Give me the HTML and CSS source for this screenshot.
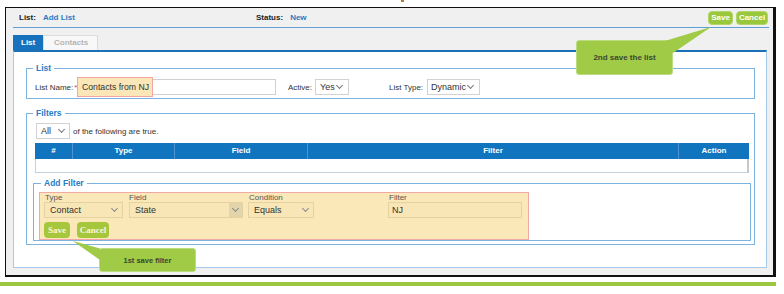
FILE: index.html
```html
<!DOCTYPE html>
<html lang="en">
<head>
  <meta charset="UTF-8">
  <title>Add List</title>
  <link rel="stylesheet" href="styles.css">
</head>
<body>
  <div class="page-top"><span class="cut"></span></div>

  <!-- screenshot frame -->
  <div class="shot">
    <div class="topbar">
      <div class="crumb"><b>List:</b><span class="val">Add List</span></div>
      <div class="crumb"><b>Status:</b><span class="val">New</span></div>
      <div class="top-actions">
        <button class="btn-green btn-save">Save</button>
        <button class="btn-green btn-cancel">Cancel</button>
      </div>
    </div>

    <div class="tabs">
      <div class="tab active">List</div>
      <div class="tab other">Contacts</div>
    </div>

    <div class="panel">
      <fieldset class="box box-list">
        <legend>List</legend>
        <div class="row">
          <span class="lbl lbl-name">List Name:<span class="req">*</span></span>
          <div class="field name-field"><span class="mark">Contacts from NJ</span></div>
          <span class="lbl lbl-active">Active:</span>
          <div class="select w-active">Yes<i class="chev"></i></div>
          <span class="lbl lbl-type">List Type:</span>
          <div class="select w-type">Dynamic<i class="chev"></i></div>
        </div>
      </fieldset>

      <fieldset class="box box-filters">
        <legend>Filters</legend>
        <div class="row all-row">
          <div class="select w-all">All<i class="chev"></i></div>
          <span class="lbl">of the following are true.</span>
        </div>

        <div class="grid">
          <div class="grid-head">
            <div>#</div>
            <div>Type</div>
            <div>Field</div>
            <div>Filter</div>
            <div>Action</div>
          </div>
          <div class="grid-body"></div>
        </div>

        <fieldset class="box box-add">
          <legend>Add Filter</legend>
          <div class="mark-area">
            <div class="cols">
              <div class="col c-type">
                <span class="cap">Type</span>
                <div class="select tan">Contact<i class="chev"></i></div>
              </div>
              <div class="col c-field">
                <span class="cap">Field</span>
                <div class="select tan">State<span class="dd"><i class="chev"></i></span></div>
              </div>
              <div class="col c-cond">
                <span class="cap">Condition</span>
                <div class="select tan">Equals<i class="chev"></i></div>
              </div>
              <div class="col c-filter">
                <span class="cap">Filter</span>
                <div class="select tan">NJ</div>
              </div>
            </div>
            <div class="actions">
              <button class="btn-serif b-save">Save</button>
              <button class="btn-serif b-cancel">Cancel</button>
            </div>
          </div>
        </fieldset>
      </fieldset>
    </div>
  </div>

  <div class="green-rule"></div>

  <!-- callouts -->
  <div class="note note-list">2nd save the list</div>
  <div class="note note-filter">1st save filter</div>
  <svg class="pointers" width="784" height="294" viewBox="0 0 784 294">
    <polygon points="711,27 663,41.5 673,53" />
    <polygon points="73,241 100,248.5 100,260" />
  </svg>
</body>
</html>
```

FILE: styles.css
```css
body {
  margin: 0;
  position: relative;
  width: 784px;
  height: 294px;
  overflow: hidden;
  background: #fff;
  color: #333;
  font-family: "Liberation Sans", Arial, sans-serif;
}

.page-top {
  height: 7px;
}
.page-top .cut {
  display: block;
  margin-left: 401px;
  width: 3px;
  height: 2px;
  background: #b9793a;
}

/* frame */
.shot {
  margin-left: 5px;
  width: 771px;
  height: 270px;
  box-sizing: border-box;
  border-style: solid;
  border-color: #111;
  border-width: 1px 3px 2px 1px;
  background: #f0f0f0;
}

.green-rule {
  margin-top: 5px;
  width: 776px;
  height: 4px;
  background: #9cc841;
}

/* top bar */
.topbar {
  display: flex;
  align-items: center;
  height: 19px;
  margin: 0 4px 0 7px;
  padding: 0 1px 0 6px;
  border-bottom: 1px solid #5e9fd6;
  font-size: 8px;
  font-weight: bold;
}
.crumb {
  display: flex;
  gap: 7px;
  color: #222;
}
.crumb:first-child {
  width: 237px;
}
.crumb .val {
  color: #2a7bc4;
}
.top-actions {
  margin-left: auto;
  display: flex;
  gap: 3px;
}
.btn-green {
  height: 14px;
  padding: 0;
  border: 1px solid #b3d66b;
  border-radius: 4px;
  background: #9ac83c;
  color: #fff;
  font-family: "Liberation Sans", Arial, sans-serif;
  font-size: 8px;
  font-weight: bold;
}
.btn-save { width: 25px; }
.btn-cancel { width: 32px; }

/* tabs */
.tabs {
  display: flex;
  margin: 7px 0 0 7px;
  height: 15px;
}
.tab {
  box-sizing: border-box;
  height: 15px;
  font-size: 8px;
  font-weight: bold;
  line-height: 15px;
}
.tab.active {
  width: 30px;
  padding-left: 8px;
  background: #1672bd;
  color: #fff;
}
.tab.other {
  width: 55px;
  padding-left: 10px;
  background: #f8f8f8;
  color: #b4b4b4;
  border: 1px solid #dcdcdc;
  border-bottom: 0;
  line-height: 14px;
}

/* panel */
.panel {
  margin: 0 6px 0 7px;
  padding: 10px 11px 22px 12px;
  border: 1px solid #a5c9e8;
  border-top: 2px solid #1b70b7;
  background: #fff;
}

.box {
  margin: 0;
  min-width: 0;
  padding: 0 3px 3px 6px;
  border: 1px solid #7db4df;
}
.box legend {
  padding: 0 3px;
  font-size: 8.5px;
  font-weight: bold;
  line-height: 12px;
  color: #2a7cc5;
}
.box-list {
  padding-top: 5px;
}
.box-filters {
  margin-top: 8px;
  padding-top: 4px;
}
.box-add {
  margin-top: 4px;
  padding: 3px 0 0 5px;
}
.box-add legend {
  margin-left: 2px;
}

.row {
  display: flex;
  align-items: center;
  height: 16px;
  padding-left: 2px;
}
.lbl {
  font-size: 8px;
  color: #333;
  white-space: nowrap;
}
.lbl-name { width: 42px; }
.lbl-active { width: 27px; }
.lbl-type { width: 38px; }
.req {
  color: #e03a3a;
  margin-left: 1px;
}

.field {
  position: relative;
  box-sizing: border-box;
  height: 16px;
  border: 1px solid #cfcfcf;
  background: #fff;
}
.name-field {
  width: 199px;
  margin-right: 12px;
}
/* highlight over the name text */
.mark {
  position: absolute;
  left: -1px;
  top: -3px;
  box-sizing: border-box;
  width: 76px;
  height: 20px;
  padding-left: 4px;
  border: 1px solid #f3a7a4;
  background: #fae6b6;
  font-size: 8.7px;
  line-height: 18px;
  color: #333;
}

.select {
  display: flex;
  align-items: center;
  box-sizing: border-box;
  height: 16px;
  padding-left: 4px;
  border: 1px solid #d2d2d2;
  background: #fff;
  font-size: 9px;
  color: #333;
}
.w-active { width: 34px; margin-right: 40px; }
.w-type { width: 53px; padding-left: 3px; }
.w-all { width: 34px; margin-right: 3px; }
.all-row { padding-left: 3px; }

.chev {
  width: 4px;
  height: 4px;
  margin: -3px 6px 0 auto;
  border-right: 1px solid #777;
  border-bottom: 1px solid #777;
  transform: rotate(45deg);
}
.w-all .chev { margin-right: 5px; }

/* filters table */
.grid {
  margin: 4px 2px 0 2px;
}
.grid-head {
  display: grid;
  grid-template-columns: 37px 102px 133px 371px 71px;
  height: 16px;
  background: #1174bf;
}
.grid-head div {
  border-left: 1px solid #4c95d0;
  color: #fff;
  font-size: 8px;
  font-weight: bold;
  line-height: 16px;
  text-align: center;
}
.grid-head div:first-child {
  border-left: 0;
}
.grid-body {
  box-sizing: border-box;
  height: 14px;
  border: 1px solid #c3d2de;
  border-top: 0;
  border-right: 2px solid #c8c8c8;
}

/* add filter */
.mark-area {
  box-sizing: border-box;
  width: 490px;
  padding: 0 0 1px 4px;
  border: 1px solid #f2a8a4;
  background: #fbe8b9;
}
.cols {
  display: flex;
}
.col {
  display: flex;
  flex-direction: column;
}
.cap {
  height: 9px;
  padding-left: 1px;
  font-size: 8px;
  line-height: 9px;
  color: #555;
}
.c-type { width: 79px; margin-right: 6px; }
.c-field { width: 114px; margin-right: 5px; }
.c-field .cap { margin-left: -1px; }
.c-cond { width: 66px; margin-right: 74px; }
.c-filter { width: 134px; }
.select.tan {
  background: #f9e6b6;
  border-color: #e4d2a2;
  padding-left: 5px;
}
.c-filter .select.tan { padding-left: 3px; }
.tan .chev {
  border-color: #8a8a8a;
  margin-right: 5px;
}
.dd {
  display: flex;
  align-items: center;
  justify-content: center;
  width: 13px;
  height: 14px;
  margin-left: auto;
  background: #e2d4ab;
}
.dd .chev {
  margin: -3px 0 0 0;
}

.actions {
  display: flex;
  gap: 7px;
  margin-top: 4px;
}
.btn-serif {
  height: 16px;
  padding: 0;
  border: 0;
  border-radius: 4px;
  background: #a6c73b;
  color: #fbf6da;
  font-family: "Liberation Serif", "Times New Roman", serif;
  font-size: 9px;
  font-weight: bold;
}
.b-save { width: 26px; }
.b-cancel { width: 32px; }

/* callouts */
.note {
  position: absolute;
  display: flex;
  align-items: center;
  justify-content: center;
  box-sizing: border-box;
  border: 1px solid #bcdc84;
  border-radius: 3px;
  background: #9fcb47;
  color: #3b4631;
  font-size: 8px;
  font-weight: bold;
}
.note-list {
  left: 576px;
  top: 40px;
  width: 97px;
  height: 35px;
}
.note-filter {
  left: 99px;
  top: 248px;
  width: 97px;
  height: 24px;
  font-size: 7.5px;
}
.pointers {
  position: absolute;
  left: 0;
  top: 0;
  pointer-events: none;
}
.pointers polygon {
  fill: #9fcb47;
}
```
